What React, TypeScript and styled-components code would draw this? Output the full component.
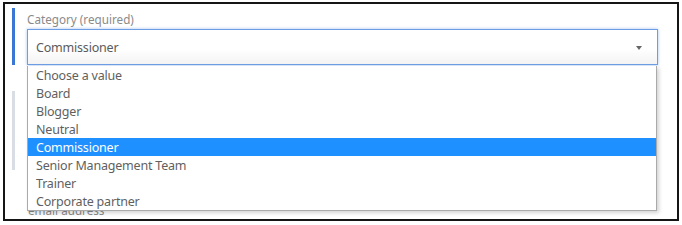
import * as React from "react";
import styled, { createGlobalStyle } from "styled-components";

const GlobalStyle = createGlobalStyle`
  html, body {
    margin: 0;
    padding: 0;
    background: #ffffff;
  }
  body {
    font-family: "Noto Sans", "Open Sans", "Liberation Sans", sans-serif;
  }
`;

const Frame = styled.div`
  position: relative;
  box-sizing: border-box;
  width: 676px;
  height: 219px;
  margin: 2px 0 0 3px;
  border: 2px solid #151515;
  background: #ffffff;
  overflow: hidden;
`;

const Form = styled.div`
  display: flex;
  flex-direction: column;
  padding: 4px 19px 0 7px;
`;

const FieldGroup = styled.div<{ $active?: boolean; $height?: number }>`
  display: flex;
  flex-direction: column;
  border-left: 3px solid ${(p) => (p.$active ? "#3a77d4" : "#d9dee4")};
  padding: ${(p) => (p.$active ? "3px 0 0 12px" : "0 0 0 12px")};
  ${(p) => (p.$height ? `height: ${p.$height}px;` : "")}
  box-sizing: border-box;
`;

const Label = styled.label<{ $indent?: number }>`
  display: block;
  font-size: 11.7px;
  line-height: 17px;
  color: #8a8a8a;
  margin-bottom: 1px;
  padding-left: ${(p) => p.$indent ?? 0}px;
`;

const SelectWrap = styled.div`
  position: relative;
  width: 631px;
`;

const SelectBox = styled.div`
  box-sizing: border-box;
  height: 36px;
  display: flex;
  align-items: center;
  padding: 1px 0 0 8px;
  border: 1px solid #6d9ee4;
  box-shadow: 0 0 3px rgba(90, 145, 230, 0.55);
  background: linear-gradient(#ffffff 55%, #f3f3f3);
  font-size: 12.5px;
  letter-spacing: -0.2px;
  color: #5a5a5a;
`;

const Caret = styled.span`
  margin-left: auto;
  margin-right: 15px;
  width: 0;
  height: 0;
  border-left: 3.5px solid transparent;
  border-right: 3.5px solid transparent;
  border-top: 4px solid #666;
`;

const Dropdown = styled.ul`
  position: absolute;
  top: 37px;
  left: 0;
  width: 630px;
  box-sizing: border-box;
  margin: 0;
  padding: 0;
  list-style: none;
  background: #ffffff;
  border: 1px solid #aaaaaa;
  border-top: none;
  box-shadow: 2px 2px 4px rgba(0, 0, 0, 0.18);
  z-index: 2;
`;

const Option = styled.li<{ $selected?: boolean }>`
  box-sizing: border-box;
  height: 18px;
  padding: 2px 0 0 8px;
  line-height: 16px;
  font-size: 12.5px;
  letter-spacing: -0.2px;
  color: ${(p) => (p.$selected ? "#ffffff" : "#5f5f5f")};
  background: ${(p) => (p.$selected ? "#1e90ff" : "transparent")};
  white-space: nowrap;
`;

const Input = styled.div`
  height: 30px;
  border: 1px solid #cfd4da;
  margin-top: 2px;
`;

const options = [
  "Choose a value",
  "Board",
  "Blogger",
  "Neutral",
  "Commissioner",
  "Senior Management Team",
  "Trainer",
  "Corporate partner",
];

export default function App() {
  return (
    <>
      <GlobalStyle />
      <Frame>
        <Form>
          <FieldGroup $active>
            <Label>Category (required)</Label>
            <SelectWrap>
              <SelectBox>
                Commissioner
                <Caret />
              </SelectBox>
              <Dropdown>
                {options.map((o) => (
                  <Option key={o} $selected={o === "Commissioner"}>
                    {o}
                  </Option>
                ))}
              </Dropdown>
            </SelectWrap>
          </FieldGroup>

          <FieldGroup $height={79} style={{ marginTop: 26 }} />

          <Label $indent={16} style={{ marginTop: 32 }}>
            email address
          </Label>
          <FieldGroup>
            <Input />
          </FieldGroup>
        </Form>
      </Frame>
    </>
  );
}
